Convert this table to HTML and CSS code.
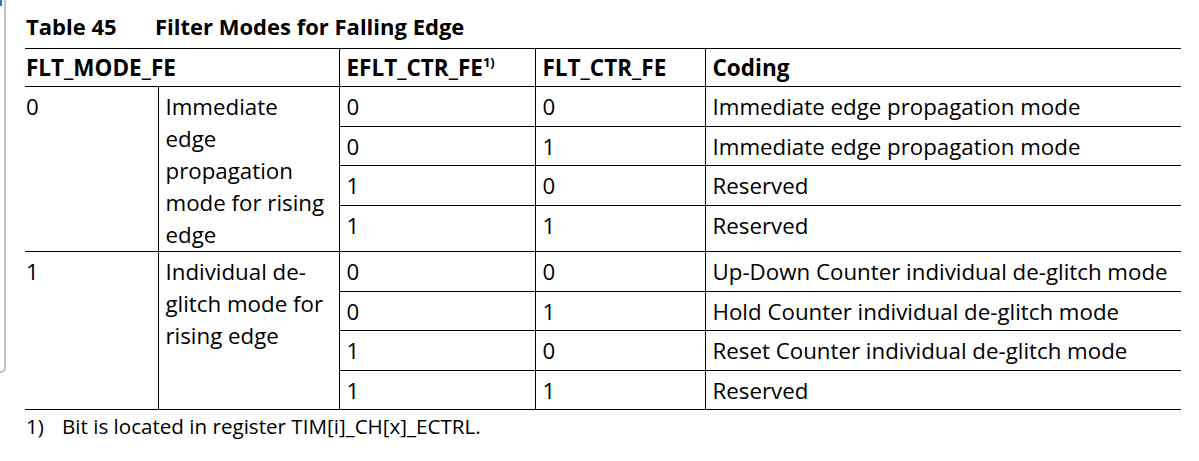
FILE: index.html
```html
<!DOCTYPE html>
<html lang="en">
<head>
<meta charset="utf-8">
<title>Table 45 Filter Modes for Falling Edge</title>
<link rel="stylesheet" href="styles.css">
</head>
<body>
<div class="frame">
  <div class="edge"><span class="marker"></span></div>
  <main class="doc">
    <h1 class="caption"><span class="cap-num">Table 45</span><span class="cap-title">Filter Modes for Falling Edge</span></h1>
    <table class="spec">
      <colgroup>
        <col class="c1"><col class="c2"><col class="c3"><col class="c4"><col class="c5">
      </colgroup>
      <thead>
        <tr>
          <th colspan="2">FLT_MODE_FE</th>
          <th>EFLT_CTR_FE<sup>1)</sup></th>
          <th>FLT_CTR_FE</th>
          <th>Coding</th>
        </tr>
      </thead>
      <tbody>
        <tr class="row">
          <td rowspan="4" class="first">0</td>
          <td rowspan="4" class="desc">Immediate edge propagation mode for rising edge</td>
          <td>0</td><td>0</td><td>Immediate edge propagation mode</td>
        </tr>
        <tr class="row"><td>0</td><td>1</td><td>Immediate edge propagation mode</td></tr>
        <tr class="row"><td>1</td><td>0</td><td>Reserved</td></tr>
        <tr><td>1</td><td>1</td><td>Reserved</td></tr>
        <tr class="row">
          <td rowspan="4" class="first">1</td>
          <td rowspan="4" class="desc">Individual de-glitch mode for rising edge</td>
          <td>0</td><td>0</td><td>Up-Down Counter individual de-glitch mode</td>
        </tr>
        <tr class="row"><td>0</td><td>1</td><td>Hold Counter individual de-glitch mode</td></tr>
        <tr class="row"><td>1</td><td>0</td><td>Reset Counter individual de-glitch mode</td></tr>
        <tr class="row"><td>1</td><td>1</td><td>Reserved</td></tr>
      </tbody>
    </table>
    <p class="note"><span class="note-num">1)</span><span>Bit is located in register TIM[i]_CH[x]_ECTRL.</span></p>
  </main>
</div>
</body>
</html>
```

FILE: styles.css
```css
html, body {
  margin: 0;
  padding: 0;
  background: #ffffff;
}

body {
  font-family: "Open Sans", "Noto Sans", sans-serif;
  font-size: 22.3px;
  color: #000000;
  width: 1199px;
  height: 461px;
  overflow: hidden;
}

.frame {
  display: flex;
  align-items: flex-start;
}

.edge {
  flex: 0 0 auto;
  width: 4px;
  height: 371px;
  border-right: 2px solid #c3c3c3;
  border-bottom: 2px solid #c3c3c3;
  border-bottom-right-radius: 5px;
  display: flex;
  flex-direction: column;
}

.marker {
  display: block;
  width: 2px;
  height: 6px;
  background: #2a6fd6;
}

.doc {
  margin-left: 19px;
  width: 1156px;
}

.caption {
  margin: 10px 0 6px 1px;
  font-size: 22px;
  font-weight: 700;
  line-height: 32px;
  display: flex;
}

.cap-num {
  width: 129px;
}

.spec {
  width: 1156px;
  table-layout: fixed;
  border-collapse: collapse;
  line-height: 32px;
}

.c1 { width: 133px; }
.c2 { width: 181px; }
.c3 { width: 196px; }
.c4 { width: 170px; }
.c5 { width: 476px; }

.spec tr.row {
  height: 39.6px;
}

.spec th,
.spec td {
  border: 1px solid #000000;
  padding: 4px 6px 2px 7px;
  text-align: left;
  vertical-align: top;
  font-weight: 400;
}

.spec th {
  font-size: 22.5px;
  font-weight: 700;
  padding-top: 3px;
  padding-bottom: 2px;
}

.spec th:first-child,
.spec td.first {
  border-left: none;
  padding-left: 1px;
}

.spec th:last-child,
.spec td:last-child {
  border-right: none;
}

.spec td.desc {
  padding-right: 14px;
  padding-bottom: 0;
}

.spec sup {
  font-size: 13px;
  line-height: 0;
  vertical-align: 9px;
}

.note {
  margin: 0 0 0 1px;
  font-size: 20.6px;
  line-height: 32px;
  display: flex;
}

.note-num {
  width: 36px;
}
```
